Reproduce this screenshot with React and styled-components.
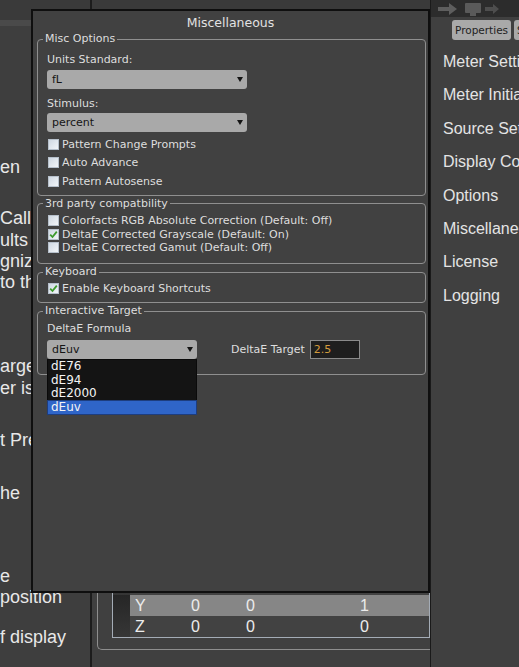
import React from 'react';
import styled, { createGlobalStyle } from 'styled-components';

const GlobalStyle = createGlobalStyle`
  html, body {
    margin: 0;
    padding: 0;
    background: #3f3f3f;
  }
  body {
    width: 519px;
    height: 667px;
    overflow: hidden;
    font-family: "DejaVu Sans", "Liberation Sans", sans-serif;
  }
  * { box-sizing: border-box; }
`;

const leftLines = [
    { gap: 131, lines: ['en'] },
    { gap: 30, lines: ['Call', 'ults', 'gnize', 'to th'] },
    { gap: 63, lines: ['arge', 'er is'] },
    { gap: 31, lines: ['t Pre'] },
    { gap: 32, lines: ['he'] },
    { gap: 61, lines: ['e', 'position'] },
    { gap: 19, lines: ['f display'] },
];

const menu = [
    'Meter Settings',
    'Meter Initialization',
    'Source Settings',
    'Display Configuration',
    'Options',
    'Miscellaneous',
    'License',
    'Logging',
];

const rows = [
    { label: 'X', values: ['1', '0', '0'], tone: 'dark' },
    { label: 'Y', values: ['0', '0', '1'], tone: 'light' },
    { label: 'Z', values: ['0', '0', '0'], tone: 'dark' },
];

function Check({ checked }) {
    return (
        <Box>
            {checked && (
                <svg width="9" height="9" viewBox="0 0 9 9">
                    <path d="M1.2 4.6 L3.5 7 L7.8 1.6" fill="none" stroke="#3d9a2c" strokeWidth="1.8" />
                </svg>
            )}
        </Box>
    );
}

function Option({ checked, height, children }) {
    return (
        <OptionRow $height={height}>
            <Check checked={checked} />
            <span>{children}</span>
        </OptionRow>
    );
}

function Combo({ width, value }) {
    return (
        <ComboBox $width={width}>
            <span>{value}</span>
            <Arrow />
        </ComboBox>
    );
}

export default function App() {
    return (
        <>
            <GlobalStyle />
            <Page>
                <LeftPane>
                    <PaneTop />
                    <PaneBand />
                    {leftLines.map((para, i) => (
                        <Para key={i} $gap={para.gap}>
                            {para.lines.map(line => <div key={line}>{line}</div>)}
                        </Para>
                    ))}
                </LeftPane>

                <CenterPane>
                    <CenterTop />
                    <MatrixGroup>
                        <Matrix>
                            {rows.map(row => (
                                <MatrixRow key={row.label} $tone={row.tone}>
                                    <RowHead $tone={row.tone} />
                                    <Cell $align="left">{row.label}</Cell>
                                    <Cell>{row.values[0]}</Cell>
                                    <Cell>{row.values[1]}</Cell>
                                    <Cell />
                                    <Cell>{row.values[2]}</Cell>
                                </MatrixRow>
                            ))}
                        </Matrix>
                    </MatrixGroup>
                </CenterPane>

                <Sidebar>
                    <SideTop>
                        <svg width="70" height="14" viewBox="0 0 70 14">
                            <path d="M3 5 H14 V1 L22 7 L14 13 V9 H3 Z" fill="#5e5e5e" />
                            <rect x="30" y="1" width="16" height="10" rx="1" fill="#5a5a5a" />
                            <rect x="35" y="11" width="6" height="3" fill="#5a5a5a" />
                            <path d="M50 5 H58 V2 L64 7 L58 12 V9 H50 Z" fill="#4e4e4e" />
                        </svg>
                    </SideTop>
                    <Tabs>
                        <Tab>Properties</Tab>
                        <Tab>Sequence</Tab>
                    </Tabs>
                    <Menu>
                        {menu.map(item => <MenuItem key={item}>{item}</MenuItem>)}
                    </Menu>
                </Sidebar>

                <Dialog>
                    <Title>Miscellaneous</Title>
                    <Body>
                        <Group $pt={7} $pb={4}>
                            <Legend>Misc Options</Legend>
                            <Label>Units Standard:</Label>
                            <Spaced $top={3}><Combo width={200} value="fL" /></Spaced>
                            <Spaced $top={8}><Label>Stimulus:</Label></Spaced>
                            <Spaced $top={2}><Combo width={200} value="percent" /></Spaced>
                            <Spaced $top={3}>
                                <Option height={18.5}>Pattern Change Prompts</Option>
                                <Option height={18.5}>Auto Advance</Option>
                                <Option height={18.5}>Pattern Autosense</Option>
                            </Spaced>
                        </Group>

                        <Group $pt={3.5} $pb={8.5}>
                            <Legend>3rd party compatbility</Legend>
                            <Option height={13.5}>Colorfacts RGB Absolute Correction (Default: Off)</Option>
                            <Option height={13.5} checked>DeltaE Corrected Grayscale (Default: On)</Option>
                            <Option height={13.5}>DeltaE Corrected Gamut (Default: Off)</Option>
                        </Group>

                        <Group $pt={2} $pb={7}>
                            <Legend>Keyboard</Legend>
                            <Option height={14} checked>Enable Keyboard Shortcuts</Option>
                        </Group>

                        <Group $pt={4} $pb={15}>
                            <Legend>Interactive Target</Legend>
                            <Label>DeltaE Formula</Label>
                            <TargetRow>
                                <ComboWrap>
                                    <Combo width={150} value="dEuv" />
                                    <DropList>
                                        <DropItem>dE76</DropItem>
                                        <DropItem>dE94</DropItem>
                                        <DropItem>dE2000</DropItem>
                                        <DropItem $active>dEuv</DropItem>
                                    </DropList>
                                </ComboWrap>
                                <TargetLabel>DeltaE Target</TargetLabel>
                                <TargetInput>2.5</TargetInput>
                            </TargetRow>
                        </Group>
                    </Body>
                </Dialog>
            </Page>
        </>
    );
}

const Page = styled.div`
    position: relative;
    width: 519px;
    height: 667px;
    display: grid;
    grid-template-columns: 90px 340px 89px;
    overflow: hidden;
    background: #3f3f3f;
`;

const LeftPane = styled.div`
    background: #3e3e3e;
    overflow: hidden;
    font-family: "Liberation Sans", Arial, sans-serif;
    font-size: 18px;
    line-height: 21.3px;
    color: #e8e8e8;
    white-space: nowrap;
`;

const PaneTop = styled.div`
    height: 20px;
    background: #3a3a3a;
`;

const PaneBand = styled.div`
    height: 6px;
    background: #4a4a4a;
`;

const Para = styled.div`
    margin-top: ${({ $gap }) => $gap}px;
`;

const CenterPane = styled.div`
    display: flex;
    flex-direction: column;
    justify-content: space-between;
    border-left: 2px solid #1c1c1c;
    background: #404040;
    overflow: hidden;
`;

const CenterTop = styled.div`
    height: 26px;
    background: #3a3a3a;
`;

const MatrixGroup = styled.div`
    margin: 0 0 17px 5px;
    padding: 0 0 11px 14px;
    border: 1px solid #8e8e8e;
    border-right: none;
    border-radius: 5px 0 0 5px;
`;

const Matrix = styled.div`
    border-left: 1px solid #a4acb6;
    border-bottom: 1px solid #a4acb6;
    border-right: 1px solid #a4acb6;
`;

const MatrixRow = styled.div`
    display: grid;
    grid-template-columns: 17px 38px 55px 55px 22px 1fr;
    height: 21px;
    align-items: center;
    background: ${({ $tone }) => ($tone === 'light' ? '#868686' : '#424242')};
    font-family: "Liberation Sans", Arial, sans-serif;
    font-size: 16px;
    color: #ececec;
`;

const RowHead = styled.div`
    height: 100%;
    background: ${({ $tone }) => ($tone === 'light' ? 'linear-gradient(#262626, #2e2e2e)' : 'linear-gradient(#2e2e2e, #363636)')};
`;

const Cell = styled.div`
    text-align: ${({ $align }) => $align || 'center'};
    padding-left: ${({ $align }) => ($align === 'left' ? '5px' : '0')};
`;

const Sidebar = styled.div`
    background: #404040;
    border-left: 1px solid #1a1a1a;
    overflow: hidden;
    white-space: nowrap;
`;

const SideTop = styled.div`
    height: 17px;
    background: #2c2c2c;
    padding: 1px 0 0 4px;
`;

const Tabs = styled.div`
    display: flex;
    gap: 3px;
    margin: 3px 0 0 21px;
`;

const Tab = styled.div`
    flex: none;
    height: 20px;
    padding: 0 3px;
    border-radius: 3px;
    background: #a9a9a9;
    color: #1e1e1e;
    font-size: 10.5px;
    line-height: 20px;
`;

const Menu = styled.div`
    margin-top: 5px;
    padding-left: 12px;
`;

const MenuItem = styled.div`
    font-family: "Liberation Sans", Arial, sans-serif;
    font-size: 16px;
    line-height: 33.4px;
    color: #e4e4e4;
`;

const Dialog = styled.div`
    position: absolute;
    left: 31px;
    top: 9px;
    width: 399px;
    height: 584px;
    background: #414141;
    border: 2px solid #0f0f0f;
    display: flex;
    flex-direction: column;
    color: #dedede;
    font-size: 11px;
`;

const Title = styled.div`
    height: 21px;
    line-height: 23px;
    text-align: center;
    font-size: 12.5px;
    color: #e2e2e2;
`;

const Body = styled.div`
    padding: 0 2px 0 4px;
    display: flex;
    flex-direction: column;
    gap: 1px;
`;

const Group = styled.fieldset`
    margin: 0;
    min-width: 0;
    border: 1px solid #8f8f8f;
    border-radius: 4px;
    padding: ${({ $pt }) => $pt}px 8px ${({ $pb }) => $pb}px 9px;
`;

const Legend = styled.legend`
    margin-left: -4px;
    padding: 0 2px;
    line-height: 14px;
    font-size: 11px;
    color: #dedede;
`;

const Label = styled.div`
    line-height: 14px;
`;

const Spaced = styled.div`
    margin-top: ${({ $top }) => $top}px;
`;

const ComboBox = styled.div`
    width: ${({ $width }) => $width}px;
    height: 19px;
    padding: 0 4px 0 5px;
    display: flex;
    align-items: center;
    justify-content: space-between;
    border-radius: 3px;
    background: #a9a9a9;
    color: #151515;
    line-height: 19px;
`;

const Arrow = styled.span`
    width: 0;
    height: 0;
    border-left: 3.5px solid transparent;
    border-right: 3.5px solid transparent;
    border-top: 5px solid #151515;
`;

const OptionRow = styled.div`
    height: ${({ $height }) => $height}px;
    display: flex;
    align-items: center;
    gap: 3px;
    padding-left: 1px;
    white-space: nowrap;
`;

const Box = styled.span`
    flex: none;
    width: 11px;
    height: 11px;
    display: flex;
    align-items: center;
    justify-content: center;
    background: linear-gradient(135deg, #cfd8e2, #f2f5f8);
    border: 1px solid #b6c0cb;
`;

const TargetRow = styled.div`
    margin-top: 4px;
    display: flex;
    align-items: center;
`;

const ComboWrap = styled.div`
    position: relative;
`;

const DropList = styled.div`
    position: absolute;
    left: 0;
    top: 100%;
    width: 150px;
    background: #141414;
    border: 1px solid #0a0a0a;
    z-index: 2;
`;

const DropItem = styled.div`
    height: 13.5px;
    line-height: 13.5px;
    padding-left: 3px;
    font-size: 12px;
    color: #f4f4f4;
    background: ${({ $active }) => ($active ? '#2f65c8' : 'transparent')};
    outline: ${({ $active }) => ($active ? '1px solid #1d3d7e' : 'none')};
`;

const TargetLabel = styled.span`
    margin-left: 34px;
`;

const TargetInput = styled.div`
    margin-left: 5px;
    width: 50px;
    height: 19px;
    padding-left: 3px;
    line-height: 17px;
    background: #1e1e1e;
    border: 1px solid #8a8a8a;
    color: #d39b3c;
`;
